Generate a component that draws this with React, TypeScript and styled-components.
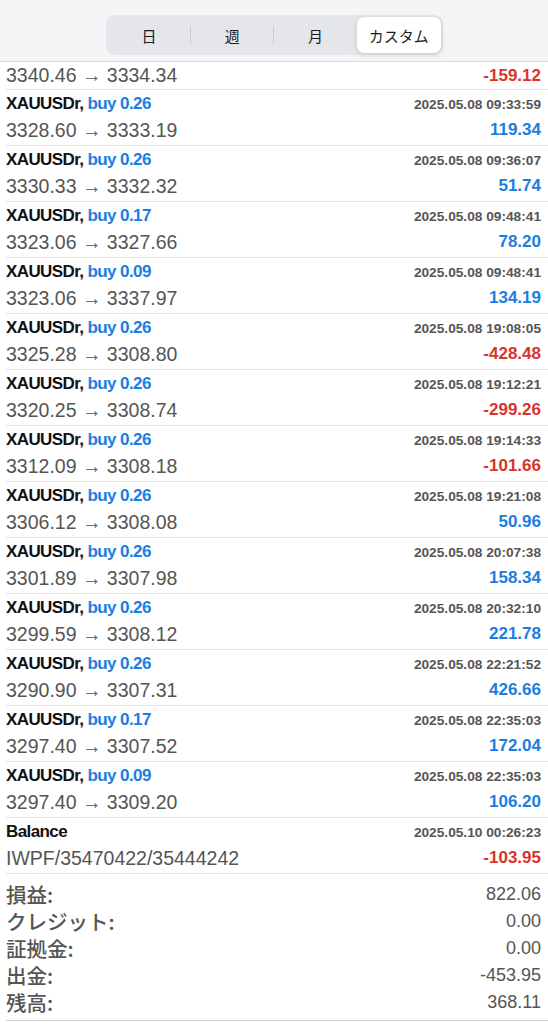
import React from "react";
import styled, { createGlobalStyle } from "styled-components";

const GlobalStyle = createGlobalStyle`
  html, body {
    margin: 0;
    padding: 0;
    background: #ffffff;
  }
  body {
    font-family: "Liberation Sans", "Noto Sans CJK JP", sans-serif;
    -webkit-font-smoothing: antialiased;
  }
`;

const Page = styled.div`
  width: 548px;
  height: 1024px;
  overflow: hidden;
  display: flex;
  flex-direction: column;
  background: #ffffff;
`;

const Header = styled.div`
  height: 62px;
  box-sizing: border-box;
  background: #f5f5f7;
  border-bottom: 1px solid #dcdcdf;
  display: flex;
  justify-content: center;
  padding-top: 15px;
`;

const Segmented = styled.div`
  width: 337px;
  height: 40px;
  box-sizing: border-box;
  padding: 2px;
  border-radius: 9px;
  background: #e5e6e9;
  display: grid;
  grid-template-columns: repeat(4, 1fr);
`;

const Segment = styled.div<{ $active?: boolean; $divider?: boolean }>`
  position: relative;
  display: flex;
  align-items: center;
  justify-content: center;
  border-radius: 7px;
  font-family: "Noto Sans CJK JP", sans-serif;
  font-size: 15px;
  color: #1c1c1e;
  background: ${(p) => (p.$active ? "#ffffff" : "transparent")};
  box-shadow: ${(p) =>
    p.$active ? "0 2px 6px rgba(0,0,0,0.12), 0 0 1px rgba(0,0,0,0.1)" : "none"};

  &::after {
    content: "";
    display: ${(p) => (p.$divider ? "block" : "none")};
    position: absolute;
    right: 0;
    top: 9px;
    bottom: 9px;
    width: 1px;
    background: #cbcbcf;
  }
`;

const List = styled.div`
  display: flex;
  flex-direction: column;
`;

const Row = styled.div<{ $partial?: boolean }>`
  height: ${(p) => (p.$partial ? "28px" : "56px")};
  box-sizing: border-box;
  margin-left: 6px;
  padding: ${(p) => (p.$partial ? "0 7px 0 0" : "2px 7px 0 0")};
  border-bottom: 1px solid #e2e2e4;
  display: flex;
  flex-direction: column;
`;

const Line = styled.div<{ $h: number }>`
  height: ${(p) => p.$h}px;
  display: flex;
  align-items: center;
  justify-content: space-between;
`;

const Title = styled.span`
  font-weight: 700;
  font-size: 17px;
  letter-spacing: -0.6px;
  color: #111111;
`;

const Side = styled.span`
  color: #1a7ee0;
`;

const Stamp = styled.span`
  font-weight: 700;
  font-size: 13.7px;
  color: #555555;
`;

const Prices = styled.span`
  font-size: 19.5px;
  color: #555555;
`;

const Profit = styled.span<{ $neg: boolean }>`
  font-weight: 700;
  font-size: 17px;
  color: ${(p) => (p.$neg ? "#d9342b" : "#1a7ee0")};
`;

const Summary = styled.div`
  margin-left: 6px;
  padding: 7px 7px 4px 0;
  border-bottom: 1px solid #cfcfd2;
  display: flex;
  flex-direction: column;
`;

const SumRow = styled.div`
  height: 27px;
  line-height: 27px;
  display: flex;
  align-items: center;
  justify-content: space-between;
  color: #555555;
`;

const SumLabel = styled.span`
  font-family: "Noto Sans CJK JP", sans-serif;
  font-weight: 500;
  font-size: 20.5px;
  line-height: 27px;
`;

const SumValue = styled.span`
  font-size: 18px;
`;

type Deal = {
  lot: string;
  time: string;
  open: string;
  close: string;
  profit: string;
};

const deals: Deal[] = [
  { lot: "0.26", time: "09:33:59", open: "3328.60", close: "3333.19", profit: "119.34" },
  { lot: "0.26", time: "09:36:07", open: "3330.33", close: "3332.32", profit: "51.74" },
  { lot: "0.17", time: "09:48:41", open: "3323.06", close: "3327.66", profit: "78.20" },
  { lot: "0.09", time: "09:48:41", open: "3323.06", close: "3337.97", profit: "134.19" },
  { lot: "0.26", time: "19:08:05", open: "3325.28", close: "3308.80", profit: "-428.48" },
  { lot: "0.26", time: "19:12:21", open: "3320.25", close: "3308.74", profit: "-299.26" },
  { lot: "0.26", time: "19:14:33", open: "3312.09", close: "3308.18", profit: "-101.66" },
  { lot: "0.26", time: "19:21:08", open: "3306.12", close: "3308.08", profit: "50.96" },
  { lot: "0.26", time: "20:07:38", open: "3301.89", close: "3307.98", profit: "158.34" },
  { lot: "0.26", time: "20:32:10", open: "3299.59", close: "3308.12", profit: "221.78" },
  { lot: "0.26", time: "22:21:52", open: "3290.90", close: "3307.31", profit: "426.66" },
  { lot: "0.17", time: "22:35:03", open: "3297.40", close: "3307.52", profit: "172.04" },
  { lot: "0.09", time: "22:35:03", open: "3297.40", close: "3309.20", profit: "106.20" },
];

const totals = [
  ["損益:", "822.06"],
  ["クレジット:", "0.00"],
  ["証拠金:", "0.00"],
  ["出金:", "-453.95"],
  ["残高:", "368.11"],
];

const tabs = ["日", "週", "月", "カスタム"];

export default function App() {
  const active = 3;
  return (
    <>
      <GlobalStyle />
      <Page>
        <Header>
          <Segmented>
            {tabs.map((t, i) => (
              <Segment
                key={t}
                $active={i === active}
                $divider={i < tabs.length - 1 && i !== active && i + 1 !== active}
              >
                {t}
              </Segment>
            ))}
          </Segmented>
        </Header>
        <List>
          <Row $partial>
            <Line $h={28}>
              <Prices>3340.46 → 3334.34</Prices>
              <Profit $neg>-159.12</Profit>
            </Line>
          </Row>
          {deals.map((d, i) => (
            <Row key={i}>
              <Line $h={24}>
                <Title>
                  XAUUSDr, <Side>buy {d.lot}</Side>
                </Title>
                <Stamp>2025.05.08 {d.time}</Stamp>
              </Line>
              <Line $h={28}>
                <Prices>
                  {d.open} → {d.close}
                </Prices>
                <Profit $neg={d.profit.startsWith("-")}>{d.profit}</Profit>
              </Line>
            </Row>
          ))}
          <Row>
            <Line $h={24}>
              <Title>Balance</Title>
              <Stamp>2025.05.10 00:26:23</Stamp>
            </Line>
            <Line $h={28}>
              <Prices>IWPF/35470422/35444242</Prices>
              <Profit $neg>-103.95</Profit>
            </Line>
          </Row>
        </List>
        <Summary>
          {totals.map(([label, value]) => (
            <SumRow key={label}>
              <SumLabel>{label}</SumLabel>
              <SumValue>{value}</SumValue>
            </SumRow>
          ))}
        </Summary>
      </Page>
    </>
  );
}
